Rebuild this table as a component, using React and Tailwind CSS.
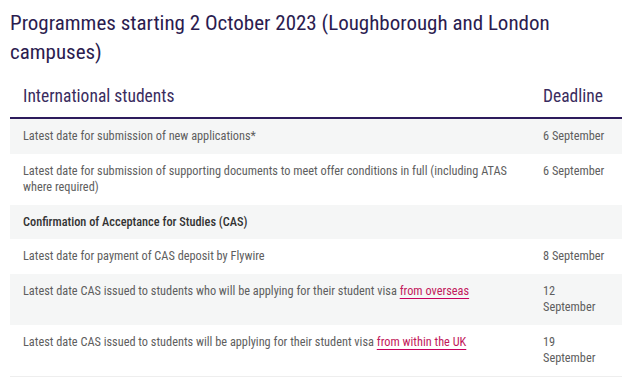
import React from 'react';

const rows = [
  { text: 'Latest date for submission of new applications*', date: '6 September', shade: true },
  { text: 'Latest date for submission of supporting documents to meet offer conditions in full (including ATAS where required)', date: '6 September' },
  { text: 'Confirmation of Acceptance for Studies (CAS)', heading: true, shade: true },
  { text: 'Latest date for payment of CAS deposit by Flywire', date: '8 September' },
  { text: 'Latest date CAS issued to students who will be applying for their student visa ', link: 'from overseas', date: '12 September', shade: true },
  { text: 'Latest date CAS issued to students will be applying for their student visa ', link: 'from within the UK', date: '19 September' },
];

const App = () => {
  return (
    <div className="bg-white min-h-[387px] px-[10px] pt-[9px]" style={{ fontFamily: '"Roboto Condensed", Roboto, sans-serif' }}>
      <h2 className="text-[21px] leading-[29px] text-[#2b1c4f] pr-[60px]">
        Programmes starting 2 October 2023 (Loughborough and London campuses)
      </h2>

      <table className="w-[612px] mt-[5px] border-collapse table-fixed">
        <colgroup>
          <col />
          <col className="w-[92px]" />
        </colgroup>
        <thead>
          <tr className="border-b-2 border-[#2d1b5c]">
            <th className="text-left font-normal text-[17.5px] leading-6 text-[#3a2c5e] px-[13px] pt-[12px] pb-[9px]">International students</th>
            <th className="text-left font-normal text-[17.5px] leading-6 text-[#3a2c5e] px-[13px] pt-[12px] pb-[9px]">Deadline</th>
          </tr>
        </thead>
        <tbody>
          {rows.map((r, i) => (
            <tr key={i} className={`${r.shade ? 'bg-[#f5f6f6]' : 'bg-white'} ${i === rows.length - 1 ? 'border-b border-[#eeeeee]' : ''}`}>
              <td className={`align-top px-[13px] py-[9px] text-[12.3px] leading-[16.5px] ${r.heading ? 'font-medium text-[#333333]' : 'text-[#5e5e5e]'}`}>
                {r.text}
                {r.link && (
                  <a href="#" className="text-[#c2185b] underline decoration-[#c8005d] underline-offset-[3px]">{r.link}</a>
                )}
              </td>
              <td className="align-top px-[13px] py-[9px] text-[12.3px] leading-[16.5px] text-[#5e5e5e]">{r.date}</td>
            </tr>
          ))}
        </tbody>
      </table>
    </div>
  );
};

export default App;
